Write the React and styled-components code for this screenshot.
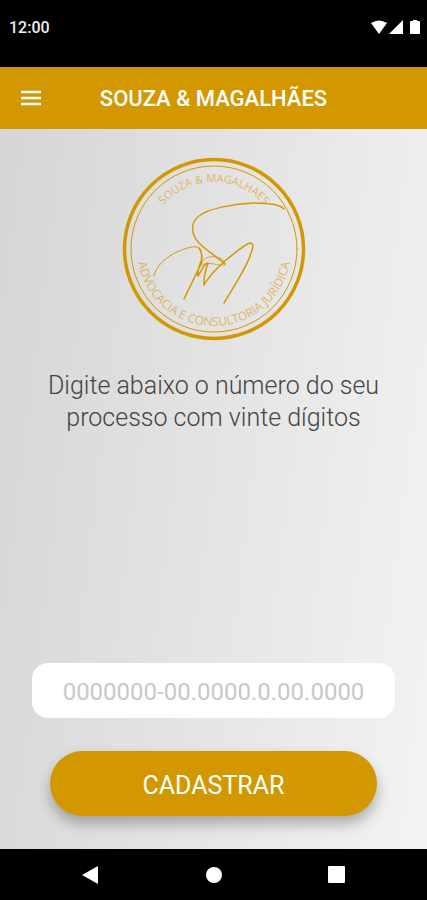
import React from 'react';
import styled, { createGlobalStyle } from 'styled-components';

const theme = {
  gold: '#d39700',
  dark: '#000000',
  light: '#ffffff',
  text: '#444444',
  placeholder: '#c8c8c8',
};

const GlobalStyle = createGlobalStyle`
  *, *::before, *::after {
    box-sizing: border-box;
  }

  body {
    margin: 0;
    font-family: Roboto, 'Liberation Sans', sans-serif;
  }

  button, input {
    font-family: inherit;
  }
`;

const StyledScreen = styled.div`
  min-height: 100vh;
  display: flex;
  flex-direction: column;
`;

const StyledStatusBar = styled.div`
  display: flex;
  align-items: center;
  justify-content: space-between;
  height: 67px;
  padding: 0 7px 12px 9px;
  background-color: ${theme.dark};
  color: #eeeeee;
  font-size: 16px;
  font-weight: 500;
`;

const StyledStatusIcons = styled.svg`
  width: 49px;
  height: 16px;
  fill: ${theme.light};
`;

const StyledHeader = styled.header`
  display: grid;
  grid-template-columns: 24px 1fr 24px;
  align-items: center;
  height: 62px;
  padding: 0 19px;
  background-color: ${theme.gold};
  color: ${theme.light};
`;

const StyledTitle = styled.h1`
  margin: 0;
  padding-top: 2px;
  font-size: 22px;
  font-weight: 500;
  line-height: 28px;
  text-align: center;
`;

const StyledIconButton = styled.button`
  display: flex;
  align-items: center;
  justify-content: center;
  padding: 0;
  border: 0;
  background: none;
  color: inherit;
  cursor: pointer;
`;

const StyledMain = styled.main`
  flex: 1;
  display: flex;
  flex-direction: column;
  align-items: center;
  padding: 28px 32px 33px;
  background: linear-gradient(97deg, #d5d5d5, #e4e4e4 50%, #f3f3f3);
`;

const StyledLogo = styled.svg`
  width: 184px;
  height: 184px;
  fill: none;
  stroke: ${theme.gold};
  stroke-linecap: round;
  stroke-linejoin: round;
`;

const StyledLogoText = styled.text`
  fill: #dfb566;
  stroke: none;
  font-family: 'Open Sans', sans-serif;
  font-size: ${({ $size }) => $size}px;
  text-anchor: middle;
`;

const StyledForm = styled.form`
  flex: 1;
  align-self: stretch;
  display: flex;
  flex-direction: column;
  align-items: center;
`;

const StyledLabel = styled.label`
  max-width: 360px;
  margin-top: 29px;
  color: ${theme.text};
  font-size: 25px;
  font-weight: 300;
  line-height: 32px;
  text-align: center;
`;

const StyledInput = styled.input`
  width: 100%;
  height: 55px;
  margin-top: auto;
  padding: 3px 16px 0;
  border: 0;
  border-radius: 16px;
  background-color: ${theme.light};
  color: ${theme.text};
  font-size: 24px;
  text-align: center;

  &::placeholder {
    color: ${theme.placeholder};
    opacity: 1;
  }
`;

const StyledButton = styled.button`
  width: 90%;
  height: 65px;
  margin-top: 33px;
  padding: 3px 0 0;
  border: 0;
  border-radius: 33px;
  background-color: ${theme.gold};
  box-shadow: 0 8px 14px rgba(0, 0, 0, 0.28);
  color: ${theme.light};
  font-size: 25px;
  cursor: pointer;
`;

const StyledNav = styled.nav`
  display: flex;
  align-items: center;
  justify-content: space-around;
  height: 51px;
  padding: 0 30px;
  background-color: ${theme.dark};
  color: ${theme.light};
`;

const StyledNavIcon = styled.svg`
  width: 20px;
  height: 20px;
  fill: currentColor;
`;

const Logo = () => (
  <StyledLogo viewBox="0 0 184 184" role="img" aria-label="Souza & Magalhães">
    <defs>
      <path id="arc-top" d="M25 92a67 67 0 0 1 134 0" />
      <path id="arc-bottom" d="M15 92a77 77 0 0 0 154 0" />
    </defs>
    <circle cx="92" cy="92" r="89.5" strokeWidth="3.5" />
    <circle cx="92" cy="92" r="83" strokeWidth="1" />
    <StyledLogoText $size={11}>
      <textPath href="#arc-top" startOffset="50%">
        SOUZA &amp; MAGALHAES
      </textPath>
    </StyledLogoText>
    <StyledLogoText $size={12}>
      <textPath href="#arc-bottom" startOffset="50%">
        ADVOCACIA E CONSULTORIA JURÍDICA
      </textPath>
    </StyledLogoText>
    <path
      strokeWidth="1.4"
      d="M162 52C158 47 145 46 131 46C112 47 90 51 80 57C67 64 69 78 77 86C85 94 94 99 103 107"
    />
    <path strokeWidth="1" d="M32 119C34 108 46 99 55 95C64 91 73 88 77 91C80 93 80 98 80 103" />
    <path
      strokeWidth="1.5"
      d="M77 91C81 96 80 103 78 109L62 142L80 105M79 104C77 110 75 116 76 119C79 115 82 106 86 106C84 112 81 121 82 128C87 119 95 111 104 103C113 96 123 87 128 86C133 86 130 94 128 99C123 113 112 129 102 146"
    />
    <path strokeWidth="0.8" d="M81 104C84 100 89 99 94 100C99 101 104 104 103 107M80 108C86 104 96 109 103 108" />
  </StyledLogo>
);

const App = () => (
  <>
    <GlobalStyle />
    <StyledScreen>
      <StyledStatusBar>
        <span>12:00</span>
        <StyledStatusIcons viewBox="0 0 49 16" aria-hidden="true">
          <path d="M0 3Q8-2 16 3L8 14Z" />
          <path d="M18 14L32 0V14Z" />
          <path d="M40 1H42V0H46V1H48Q49 1 49 2V13Q49 14 48 14H40Q39 14 39 13V2Q39 1 40 1Z" />
        </StyledStatusIcons>
      </StyledStatusBar>
      <StyledHeader>
        <StyledIconButton type="button" aria-label="Menu">
          <svg width="22" height="18" viewBox="0 0 22 18" fill="none" stroke="currentColor" strokeWidth="2.4">
            <path d="M1 3H21M1 9H21M1 15H21" />
          </svg>
        </StyledIconButton>
        <StyledTitle>SOUZA &amp; MAGALHÃES</StyledTitle>
      </StyledHeader>
      <StyledMain>
        <Logo />
        <StyledForm onSubmit={(e) => e.preventDefault()}>
          <StyledLabel htmlFor="processo">
            Digite abaixo o número do seu processo com vinte dígitos
          </StyledLabel>
          <StyledInput id="processo" type="text" inputMode="numeric" placeholder="0000000-00.0000.0.00.0000" />
          <StyledButton type="submit">CADASTRAR</StyledButton>
        </StyledForm>
      </StyledMain>
      <StyledNav>
        <StyledIconButton type="button" aria-label="Voltar">
          <StyledNavIcon viewBox="0 0 20 20">
            <path d="M1 10L17 1V19Z" />
          </StyledNavIcon>
        </StyledIconButton>
        <StyledIconButton type="button" aria-label="Início">
          <StyledNavIcon viewBox="0 0 20 20">
            <circle cx="11" cy="10" r="8" />
          </StyledNavIcon>
        </StyledIconButton>
        <StyledIconButton type="button" aria-label="Recentes">
          <StyledNavIcon viewBox="0 0 20 20">
            <rect x="2" y="1" width="17" height="17" rx="1" />
          </StyledNavIcon>
        </StyledIconButton>
      </StyledNav>
    </StyledScreen>
  </>
);

export default App;
